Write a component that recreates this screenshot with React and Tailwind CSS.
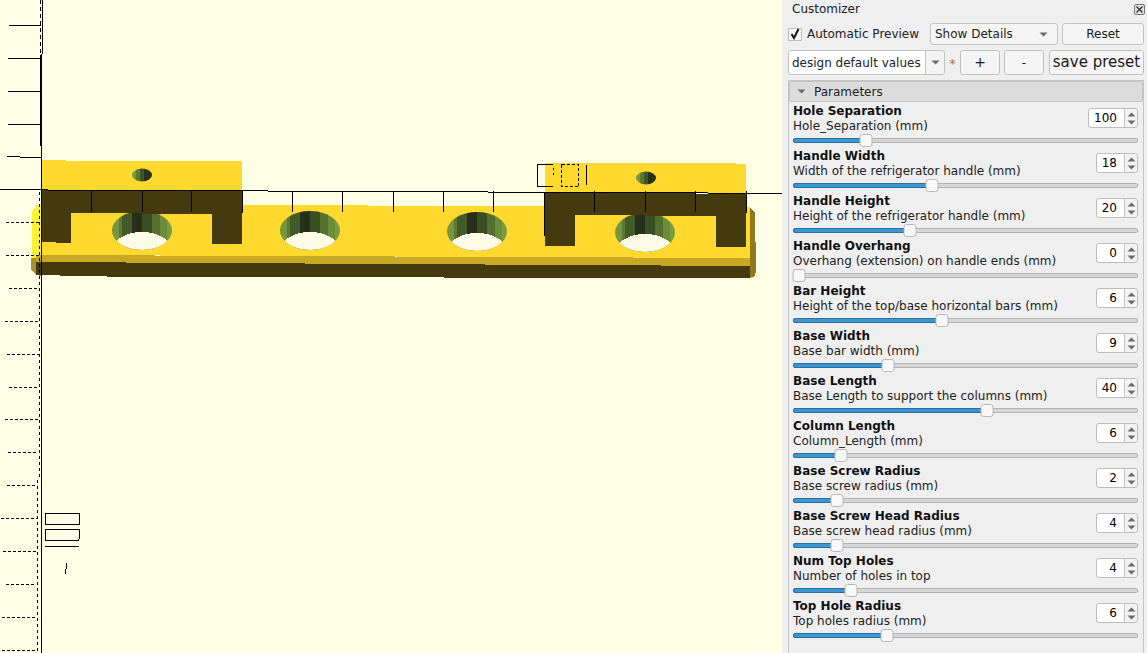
const params = [
  { title: 'Hole Separation', desc: 'Hole_Separation (mm)', value: '100', handle: 73, wide: true },
  { title: 'Handle Width', desc: 'Width of the refrigerator handle (mm)', value: '18', handle: 139 },
  { title: 'Handle Height', desc: 'Height of the refrigerator handle (mm)', value: '20', handle: 117 },
  { title: 'Handle Overhang', desc: 'Overhang (extension) on handle ends (mm)', value: '0', handle: 6 },
  { title: 'Bar Height', desc: 'Height of the top/base horizontal bars (mm)', value: '6', handle: 149 },
  { title: 'Base Width', desc: 'Base bar width (mm)', value: '9', handle: 95 },
  { title: 'Base Length', desc: 'Base Length to support the columns (mm)', value: '40', handle: 194 },
  { title: 'Column Length', desc: 'Column_Length (mm)', value: '6', handle: 48 },
  { title: 'Base Screw Radius', desc: 'Base screw radius (mm)', value: '2', handle: 44 },
  { title: 'Base Screw Head Radius', desc: 'Base screw head radius (mm)', value: '4', handle: 44 },
  { title: 'Num Top Holes', desc: 'Number of holes in top', value: '4', handle: 58 },
  { title: 'Top Hole Radius', desc: 'Top holes radius (mm)', value: '6', handle: 94 },
]

const holeStripes = [
  [-30, 7, '#76963f'], [-23, 3, '#5c7832'], [-20, 10, '#425a28'], [-10, 10, '#252f19'],
  [0, 10, '#3a4e23'], [10, 8, '#556f2f'], [18, 7, '#6c8c39'], [25, 5, '#7b9c42'],
]

const Hole = ({ id, cx, cy }) => (
  <g>
    <clipPath id={id}>
      <ellipse cx={cx} cy={cy} rx="30" ry="19.5" />
    </clipPath>
    <g clipPath={`url(#${id})`}>
      {holeStripes.map(([dx, w, fill]) => (
        <rect key={dx} x={cx + dx} y={cy - 20} width={w} height="40" fill={fill} />
      ))}
      <ellipse cx={cx} cy={cy + 20} rx="30" ry="18.5" fill="#fbfbe6" />
    </g>
  </g>
)

const SmallHole = ({ id, cx, cy }) => (
  <g>
    <clipPath id={id}>
      <ellipse cx={cx} cy={cy} rx="10" ry="6.5" />
    </clipPath>
    <g clipPath={`url(#${id})`}>
      <rect x={cx - 10} y={cy - 7} width="4" height="14" fill="#76963f" />
      <rect x={cx - 6} y={cy - 7} width="4" height="14" fill="#5c7832" />
      <rect x={cx - 2} y={cy - 7} width="4" height="14" fill="#3f5526" />
      <rect x={cx + 2} y={cy - 7} width="8" height="14" fill="#26321a" />
    </g>
  </g>
)

const dashedTicks = [
  [222, 6, 40], [255, 6, 40], [288, 9, 40], [321, 5, 39], [354, 7, 39], [387, 9, 39], [419, 5, 38],
  [452, 8, 38], [485, 7, 37], [518, 1, 37], [551, 3, 37], [584, 6, 36], [617, 2, 35], [650, 2, 35],
]

const Viewport = () => (
  <svg width="782" height="653" viewBox="0 0 782 653" shapeRendering="crispEdges" className="block shrink-0">
    <rect width="782" height="653" fill="#ffffe5" />

    {/* end faces of the base */}
    <polygon points="36,205 41,204 41,258 32,258 32,212" fill="#fdf22f" />
    <polygon points="31,258 41,258 41,276 36,275 31,270" fill="#a8902a" />
    <polygon points="750,207 755,213 756,270 755,276 750,278" fill="#8d7a1e" />

    {/* base */}
    <polygon points="41,204 242,205 746,207 750,207 750,258 41,255" fill="#ffd92d" />
    <polygon points="36,255 750,258 750,266 36,262" fill="#c7a924" />
    <polygon points="36,262 750,266 750,278 130,277 36,275" fill="#45390e" />

    <Hole id="h1" cx={142} cy={230.5} />
    <Hole id="h2" cx={310} cy={230.5} />
    <Hole id="h3" cx={477} cy={231.5} />
    <Hole id="h4" cx={645} cy={232.5} />

    {/* handles */}
    <polygon points="41,160 66,160 66,161 242,161 242,191 41,190" fill="#ffd92d" />
    <polygon points="545,163 725,163 746,164 746,193 545,192" fill="#ffd92d" />
    <SmallHole id="s1" cx={142} cy={175} />
    <SmallHole id="s2" cx={646} cy={178} />
    <polygon points="41,190 242,191 242,244 212,244 212,214 71,213 71,243 41,242" fill="#45390e" />
    <polygon points="545,192 746,194 746,247 716,247 716,216 575,215 575,246 545,246" fill="#45390e" />

    {/* axis and ruler lines */}
    <g stroke="#000" strokeWidth="1" fill="none">
      <path d="M0 189.5H48M48 190.5H268M268 191.5H488M488 192H708M708 193.5H782" />
      {[91, 142, 191, 242, 292, 342, 393, 443, 493, 594, 645, 695, 746].map((x) => (
        <path key={x} d={`M${x}.5 191V${x === 242 || x === 746 ? 213 : 212}`} />
      ))}
      <path d="M544.5 192V236" />
      <path d="M42.5 0V54M41 54V653M40.5 55V146" />
      <path d="M40.5 0V54" strokeDasharray="4 3" />
      <path d="M7 156.5H20M20 157.5H41" />
      {[[25, 9], [58, 8], [91, 8], [124, 8]].map(([y, x]) => (
        <path key={y} d={`M${x} ${y}.5H41`} />
      ))}
      {dashedTicks.map(([y, x1, x2]) => (
        <path key={y} d={`M${x1} ${y}.5H${x2}`} strokeDasharray="3 2" />
      ))}
      <path d="M39.5 192V480M37.5 480V653" strokeDasharray="3 3" />

      <path d="M45.5 513.5H79.5V524.5H45.5Z" />
      <path d="M45.5 529.5H79.5V537L78.5 540.5H45.5Z" />
      <path d="M45 546.5H79" />
      <path d="M66.5 563V569M65.5 569V574" />

      <path d="M553 164.5H537V186.5H553" />
      <path d="M553.5 168V177" strokeDasharray="2 3" />
      <path d="M561.5 164.5H578.5V186.5H561.5Z" strokeDasharray="3 2" />
      <path d="M586.5 165V185" />
    </g>
  </svg>
)

const Caret = ({ className }) => (
  <svg width="9" height="5" viewBox="0 0 9 5" className={className}>
    <path d="M0.5 0.5H8.5L4.5 4.5Z" fill="#6b6b6b" />
  </svg>
)

const Spinner = ({ value, wide }) => (
  <div className={`flex h-[20px] ${wide ? 'w-[50px]' : 'w-[42px]'} rounded-[3px] border border-[#bdbdbd] bg-white`}>
    <span className="flex flex-1 items-center justify-end pr-[7px] text-[12px] leading-none text-black">{value}</span>
    <div className="flex w-[13px] flex-col items-center justify-center gap-[3px] rounded-r-[3px] border-l border-[#c4c4c4] bg-[#f3f3f3]">
      <Caret className="rotate-180" />
      <Caret />
    </div>
  </div>
)

const Slider = ({ handle }) => (
  <div className="relative mx-[5px] h-[13px] w-[345px]">
    <div className="absolute inset-x-0 top-[4px] h-[5px] rounded-[2px] border border-[#b3b3b3] bg-[#d6d6d6]" />
    <div
      className="absolute left-0 top-[4px] h-[5px] rounded-l-[2px] border border-[#2a6f9e] bg-[#3b96d4]"
      style={{ width: handle }}
    />
    <div
      className="absolute top-0 h-[13px] w-[13px] -translate-x-1/2 rounded-[3px] border border-[#b8b8b8] bg-[#f8f8f8]"
      style={{ left: handle }}
    />
  </div>
)

const ParamRow = ({ title, desc, value, handle, wide }) => (
  <div className="h-[45px]">
    <div className="flex h-[32px] items-center justify-between px-[5px]">
      <div className="flex flex-col pt-[2px]">
        <span className="text-[12px] font-bold leading-[15px] text-[#111]">{title}</span>
        <span className="text-[12px] leading-[15px] text-[#222]">{desc}</span>
      </div>
      <Spinner value={value} wide={wide} />
    </div>
    <Slider handle={handle} />
  </div>
)

const Button = ({ children, className }) => (
  <div className={`flex shrink-0 items-center justify-center rounded-[3px] border border-[#c2c2c2] bg-[#f5f5f5] text-[#1a1a1a] ${className}`}>
    {children}
  </div>
)

const Customizer = () => (
  <div className="flex h-[653px] w-[365px] shrink-0 flex-col overflow-hidden bg-[#efefef] text-[12px] text-[#222]">
    {/* Title */}
    <div className="flex h-[18px] items-center justify-between pl-[10px] pr-[2px]">
      <span className="leading-none">Customizer</span>
      <div className="flex h-[11px] w-[11px] items-center justify-center rounded-[2px] border border-[#777] bg-[#e2e2e2]">
        <svg width="7" height="7" viewBox="0 0 7 7">
          <path d="M0.5 0.5L6.5 6.5M6.5 0.5L0.5 6.5" stroke="#333" strokeWidth="1.4" />
        </svg>
      </div>
    </div>

    {/* Preview row */}
    <div className="mt-[5px] flex h-[22px] items-center pl-[6px] pr-[3px]">
      <div className="flex h-[13px] w-[14px] items-center justify-center border border-[#bdbdbd] bg-white">
        <svg width="12" height="12" viewBox="0 0 12 12">
          <path d="M2.5 6L5 10L9.5 1" fill="none" stroke="#111" strokeWidth="2" />
        </svg>
      </div>
      <span className="ml-[5px] w-[123px]">Automatic Preview</span>
      <div className="flex h-[22px] w-[128px] items-center justify-between rounded-[3px] border border-[#c2c2c2] bg-[#f5f5f5] pl-[4px] pr-[9px]">
        <span>Show Details</span>
        <Caret />
      </div>
      <Button className="ml-[4px] h-[22px] w-[82px]">Reset</Button>
    </div>

    {/* Preset row */}
    <div className="mt-[5px] flex h-[25px] items-center pl-[6px] pr-[3px]">
      <div className="flex h-[25px] w-[157px] rounded-[3px] border border-[#c2c2c2] bg-white">
        <span className="flex flex-1 items-center whitespace-nowrap pl-[3px]">design default values</span>
        <div className="flex w-[19px] items-center justify-center rounded-r-[3px] border-l border-[#c2c2c2] bg-[#f3f3f3]">
          <Caret />
        </div>
      </div>
      <span className="w-[15px] pt-[2px] text-center text-[#a8703c]">*</span>
      <Button className="h-[25px] w-[40px] text-[14px]">+</Button>
      <Button className="ml-[4px] h-[25px] w-[40px]">-</Button>
      <Button className="ml-[5px] h-[25px] w-[95px] text-[15px]">save preset</Button>
    </div>

    {/* Parameters */}
    <div className="ml-[6px] mr-[3px] mt-[5px] flex-1 border border-b-0 border-[#c4c4c4]">
      <div className="flex h-[21px] items-center rounded-[2px] border border-[#c4c4c4] bg-[#dcdcdc] pl-[7px]">
        <Caret />
        <span className="ml-[8px]">Parameters</span>
      </div>
      <div className="-ml-px">
        {params.map((p) => (
          <ParamRow key={p.title} {...p} />
        ))}
      </div>
    </div>
  </div>
)

export default function App() {
  return (
    <div
      className="flex h-[653px] w-[1147px] overflow-hidden"
      style={{ fontFamily: '"DejaVu Sans", sans-serif' }}
    >
      <Viewport />
      <Customizer />
    </div>
  )
}
